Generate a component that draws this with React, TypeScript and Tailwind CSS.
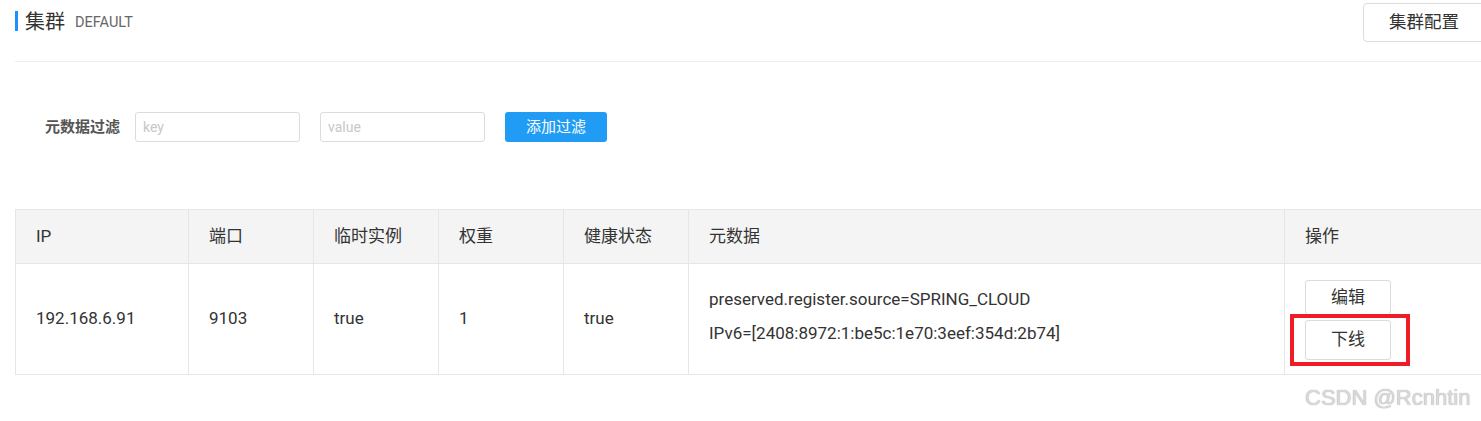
import React from 'react';

const font = { fontFamily: 'Roboto, "Noto Sans CJK SC", sans-serif' };

const columns = [
    { title: 'IP', w: 'w-[173px]' },
    { title: '端口', w: 'w-[125px]' },
    { title: '临时实例', w: 'w-[125px]' },
    { title: '权重', w: 'w-[125px]' },
    { title: '健康状态', w: 'w-[125px]' },
    { title: '元数据', w: 'w-[596px]' },
    { title: '操作', w: 'w-[220px]' },
];

const App: React.FC = () => {
    return (
        <div className="relative w-[1481px] h-[421px] overflow-hidden bg-white text-[#333]" style={font}>
            <div className="pl-[15px]">
                {/* title bar */}
                <div className="flex items-start justify-between h-[62px] border-b border-[#eeeeee] w-[1501px]">
                    <div className="flex items-center mt-[11px] h-[20px]">
                        <span className="w-[3px] h-[20px] bg-[#1e90ff]" />
                        <span className="ml-[7px] text-[20px] leading-none text-[#333] mt-[2px]">集群</span>
                        <span className="ml-[10px] text-[14.5px] leading-none text-[#666] mt-[4px]">DEFAULT</span>
                    </div>
                    <button className="mt-[3px] w-[153px] h-[39px] border border-[#dcdcdc] rounded-[4px] bg-white text-[17.5px] text-[#333] text-left pl-[25px] whitespace-nowrap">
                        集群配置
                    </button>
                </div>

                {/* filter */}
                <div className="flex items-center mt-[50px] pl-[30px] h-[30px]">
                    <span className="text-[15px] font-bold text-[#555] w-[90px]">元数据过滤</span>
                    <input
                        placeholder="key"
                        className="w-[165px] h-[30px] border border-[#dcdcdc] rounded-[3px] px-[7px] text-[14px] placeholder:text-[#c8c8c8] outline-none"
                    />
                    <input
                        placeholder="value"
                        className="ml-[20px] w-[165px] h-[30px] border border-[#dcdcdc] rounded-[3px] px-[7px] text-[14px] placeholder:text-[#c8c8c8] outline-none"
                    />
                    <button className="ml-[20px] w-[102px] h-[30px] rounded-[3px] bg-[#209cf5] text-white text-[15px]">
                        添加过滤
                    </button>
                </div>

                {/* table */}
                <table className="mt-[67px] border-collapse table-fixed w-[1489px] text-[17px]">
                    <thead>
                        <tr className="bg-[#f4f4f4] h-[54px]">
                            {columns.map((c) => (
                                <th key={c.title} className={`${c.w} border border-[#e6e6e6] text-left font-normal pl-[20px]`}>
                                    {c.title}
                                </th>
                            ))}
                        </tr>
                    </thead>
                    <tbody>
                        <tr className="h-[111px]">
                            <td className="border border-[#e6e6e6] pl-[20px]">192.168.6.91</td>
                            <td className="border border-[#e6e6e6] pl-[20px]">9103</td>
                            <td className="border border-[#e6e6e6] pl-[20px]">true</td>
                            <td className="border border-[#e6e6e6] pl-[20px]">1</td>
                            <td className="border border-[#e6e6e6] pl-[20px]">true</td>
                            <td className="border border-[#e6e6e6] pl-[20px]">
                                <div className="flex flex-col gap-[12px] leading-[22px] mb-[6px]">
                                    <span>preserved.register.source=SPRING_CLOUD</span>
                                    <span>IPv6=[2408:8972:1:be5c:1e70:3eef:354d:2b74]</span>
                                </div>
                            </td>
                            <td className="border border-[#e6e6e6] pl-[20px]">
                                <div className="flex flex-col gap-[5px] w-[86px] mt-[2px]">
                                    <button className="h-[35px] border border-[#dcdcdc] rounded-[3px] bg-white">编辑</button>
                                    <div className="relative">
                                        <button className="w-full h-[40px] border border-[#dcdcdc] rounded-[3px] bg-white">下线</button>
                                        <span className="absolute left-[-15px] top-[-6px] w-[120px] h-[52px] border-[4px] border-[#ee1c25] pointer-events-none" />
                                    </div>
                                </div>
                            </td>
                        </tr>
                    </tbody>
                </table>
            </div>

            <span
                className="absolute left-[1305px] top-[381px] text-[22px] text-[#dadada] whitespace-nowrap"
                style={{ fontFamily: '"Liberation Sans", Arial, sans-serif', textShadow: '0 0 1px #999' }}
            >
                CSDN @Rcnhtin
            </span>
        </div>
    );
};

export default App;
